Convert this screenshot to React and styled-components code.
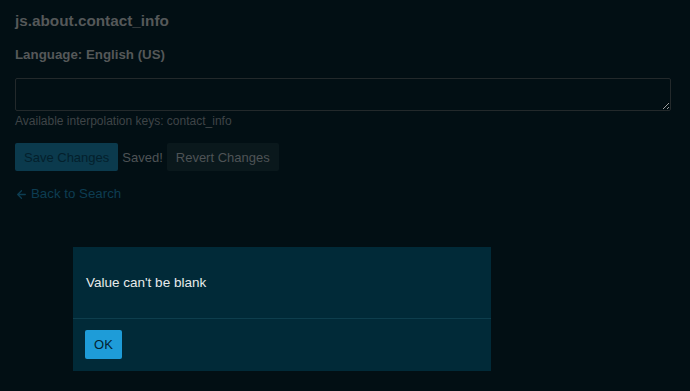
import React from 'react'
import styled, { createGlobalStyle } from 'styled-components'

const GlobalStyle = createGlobalStyle`
  html, body {
    margin: 0;
    padding: 0;
    background: #020f14;
    font-family: "Liberation Sans", Arial, sans-serif;
  }
`

const Styled = {
  Page: styled.div`
    box-sizing: border-box;
    height: 391px;
    padding: 11px 20px 0 15px;
    position: relative;
    overflow: hidden;
  `,
  Title: styled.h1`
    color: #555859;
    font-size: 15.3px;
    font-weight: bold;
    margin: 0 0 15px;
    line-height: 20px;
  `,
  Label: styled.h3`
    color: #555859;
    font-size: 13.3px;
    font-weight: bold;
    margin: 0 0 14px;
    line-height: 18px;
  `,
  TextArea: styled.textarea`
    box-sizing: border-box;
    display: block;
    width: 656px;
    height: 33px;
    background: #020f14;
    border: 1px solid #23292b;
    border-radius: 2px;
    margin: 0 0 2px;
    resize: vertical;
  `,
  Help: styled.div`
    color: #3f4447;
    font-size: 12px;
    line-height: 16px;
    margin-bottom: 14px;
  `,
  Actions: styled.div`
    display: flex;
    align-items: center;
    gap: 4px;
    margin-bottom: 15px;
  `,
  Button: styled.button`
    font-family: inherit;
    font-size: 13px;
    border: none;
    border-radius: 2px;
    height: 28px;
    padding: 0 9px;
    background: ${p => p.$primary ? '#0b3a4d' : '#0a181c'};
    color: ${p => p.$primary ? '#03202c' : '#4e5356'};
  `,
  Saved: styled.span`
    color: #4e5356;
    font-size: 13px;
  `,
  Back: styled.a`
    color: #0d3d52;
    font-size: 13.3px;
    line-height: 16px;
    text-decoration: none;
    display: inline-flex;
    align-items: center;
    gap: 3px;
  `,
  Modal: styled.div`
    position: absolute;
    left: 73px;
    top: 247px;
    width: 418px;
    background: #012a38;
  `,
  ModalBody: styled.div`
    color: #e8eaeb;
    font-size: 13.5px;
    padding: 28px 13px 27px;
    line-height: 16px;
    border-bottom: 1px solid #0e3e4d;
  `,
  ModalFooter: styled.div`
    padding: 11px 12px 12px;
  `,
  OkButton: styled.button`
    font-family: inherit;
    font-size: 13px;
    border: none;
    border-radius: 2px;
    height: 29px;
    width: 37px;
    background: #1e9cd8;
    color: #032331;
  `
}

const App = () => (
  <Styled.Page>
    <GlobalStyle />
    <Styled.Title>js.about.contact_info</Styled.Title>
    <Styled.Label>Language: English (US)</Styled.Label>
    <Styled.TextArea />
    <Styled.Help>Available interpolation keys: contact_info</Styled.Help>
    <Styled.Actions>
      <Styled.Button $primary>Save Changes</Styled.Button>
      <Styled.Saved>Saved!</Styled.Saved>
      <Styled.Button>Revert Changes</Styled.Button>
    </Styled.Actions>
    <Styled.Back href="#">
      <svg width="13" height="13" viewBox="0 0 24 24" fill="none" stroke="currentColor" strokeWidth="2.4" strokeLinecap="round" strokeLinejoin="round">
        <path d="M19 12H5M12 19l-7-7 7-7" />
      </svg>
      Back to Search
    </Styled.Back>
    <Styled.Modal>
      <Styled.ModalBody>Value can't be blank</Styled.ModalBody>
      <Styled.ModalFooter>
        <Styled.OkButton>OK</Styled.OkButton>
      </Styled.ModalFooter>
    </Styled.Modal>
  </Styled.Page>
)

export default App
